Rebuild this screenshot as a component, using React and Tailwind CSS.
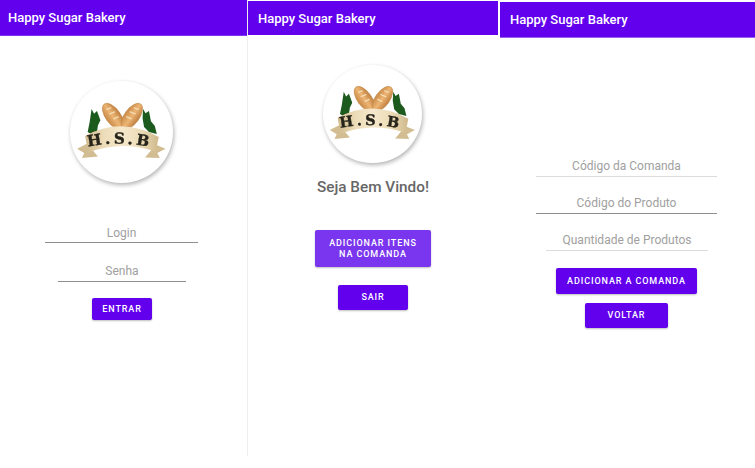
const font = { fontFamily: "Roboto, sans-serif" };

function Logo({ className, id }) {
  return (
    <svg viewBox="0 0 104 104" className={className}>
      <defs>
        <path id={id} d="M18 67 Q52 59 97 71" fill="none" />
        <linearGradient id={id + "b"} x1="0" y1="0" x2="1" y2="0">
          <stop offset="0%" stopColor="#c98a48" />
          <stop offset="50%" stopColor="#edb574" />
          <stop offset="100%" stopColor="#c08040" />
        </linearGradient>
        <linearGradient id={id + "c"} x1="0" y1="0" x2="1" y2="0">
          <stop offset="0%" stopColor="#cfb98c" />
          <stop offset="25%" stopColor="#ecdcb8" />
          <stop offset="50%" stopColor="#f6e8cc" />
          <stop offset="75%" stopColor="#ecdcb8" />
          <stop offset="100%" stopColor="#cfb98c" />
        </linearGradient>
      </defs>
      <path d="M21.5 28.5 L24 33.5 L27 30.5 L30.5 40 L28 45 L27 52 L21 54 L17.5 52 L19.5 42 Z" fill="#1c5a1e" />
      <path d="M74 28.5 L76.5 33 L80 30.5 L82 41 L86 46 L88 54 L80 52 L75 47 L73.5 38 Z" fill="#1c5a1e" />
      <ellipse cx="43.5" cy="36" rx="7.6" ry="15.5" transform="rotate(-36 43.5 36)" fill={`url(#${id}b)`} stroke="#b9803f" strokeWidth="0.5" />
      <ellipse cx="62.5" cy="36" rx="7.6" ry="15.5" transform="rotate(36 62.5 36)" fill={`url(#${id}b)`} stroke="#b9803f" strokeWidth="0.5" />
      <g stroke="#f3dcb4" strokeWidth="1.4" strokeLinecap="round">
        <path d="M37 29 L41 27.5 M40 33.5 L45 31.5 M44 38.5 L48.5 36.5" />
        <path d="M69 29 L65 27.5 M66 33.5 L61 31.5 M62 38.5 L57.5 36.5" />
      </g>
      <path d="M6.7 69 L16.7 64 L28 77 L11.7 78.5 L14 73.5 Z" fill="#d2bd92" />
      <path d="M97 69 L87 65 L76 78 L91 78.5 L88.5 73.5 Z" fill="#d2bd92" />
      <path d="M15 56 Q52 36 90 57 L87 72 Q52 60 18 73 Z" fill={`url(#${id}c)`} />
      <text fill="#26241a" stroke="#26241a" strokeWidth="0.4" style={{ fontFamily: "'DejaVu Serif', serif", fontWeight: 700, fontSize: 15.5, letterSpacing: 3.2 }}>
        <textPath href={`#${id}`}>H.S.B</textPath>
      </text>
    </svg>
  );
}

function Circle({ className, id }) {
  return (
    <div className={`rounded-full bg-white shadow-[1px_2px_4px_rgba(0,0,0,0.3)] blur-[0.4px] ${className}`}>
      <Logo className="w-full h-full" id={id} />
    </div>
  );
}

function Header({ className }) {
  return (
    <div className={`flex items-center bg-[#6200ee] text-white text-[13px] font-medium pt-px ${className}`}>
      Happy Sugar Bakery
    </div>
  );
}

function Field({ label, className, line }) {
  return (
    <div className={`text-center text-[#a0a0a0] text-[12px] leading-[15px] border-b ${line} ${className}`}>{label}</div>
  );
}

function Btn({ children, className }) {
  return (
    <div className={`flex items-center justify-center text-center text-white text-[9px] leading-[11px] font-medium tracking-[0.9px] rounded-[2px] shadow-[0_1px_2px_rgba(0,0,0,0.25)] ${className}`}>
      {children}
    </div>
  );
}

export default function App() {
  return (
    <div className="flex w-[755px] h-[468px] bg-white overflow-hidden" style={font}>
      <div className="flex flex-col items-start w-[248px] h-[456px] border-r border-[#efefef]">
        <Header className="w-[247px] h-[36px] pl-[8px] border-b border-[#7d35f0]" />
        <Circle className="w-[103px] h-[102px] ml-[70px] mt-[45px]" id="a" />
        <Field label="Login" className="w-[153px] ml-[45px] mt-[43px] pb-[1px]" line="border-[#8f8f8f]" />
        <Field label="Senha" className="w-[128px] ml-[58px] mt-[21px] pb-[2px]" line="border-[#8f8f8f]" />
        <Btn className="w-[60px] h-[22px] ml-[92px] mt-[16px] bg-[#6200ee]">ENTRAR</Btn>
      </div>
      <div className="flex flex-col items-start w-[252px] pt-px">
        <Header className="w-[250px] h-[34px] pl-[10px]" />
        <Circle className="w-[99px] h-[98px] ml-[75px] mt-[30px]" id="b" />
        <div className="ml-[69px] mt-[15px] text-[15.3px] leading-[19px] font-medium text-[#666666]">Seja Bem Vindo!</div>
        <Btn className="w-[116px] h-[37px] ml-[67px] mt-[33px] bg-[#7a35ee]">ADICIONAR ITENS<br />NA COMANDA</Btn>
        <Btn className="w-[70px] h-[25px] ml-[90px] mt-[18px] bg-[#6200ee]">SAIR</Btn>
      </div>
      <div className="flex flex-col items-start w-[255px] pt-[2px]">
        <Header className="w-[255px] h-[36px] pl-[10px] border-b border-[#9a60f0]" />
        <Field label="Código da Comanda" className="w-[181px] ml-[36px] mt-[121px] pb-[2px]" line="border-[#dcdcdc]" />
        <Field label="Código do Produto" className="w-[181px] ml-[36px] mt-[19px] pb-[2px]" line="border-[#8f8f8f]" />
        <Field label="Quantidade de Produtos" className="w-[162px] ml-[46px] mt-[19px] pb-[2px]" line="border-[#dcdcdc]" />
        <Btn className="w-[141px] h-[26px] ml-[56px] mt-[17px] bg-[#6200ee]">ADICIONAR A COMANDA</Btn>
        <Btn className="w-[83px] h-[25px] ml-[85px] mt-[9px] bg-[#6200ee]">VOLTAR</Btn>
      </div>
    </div>
  );
}
